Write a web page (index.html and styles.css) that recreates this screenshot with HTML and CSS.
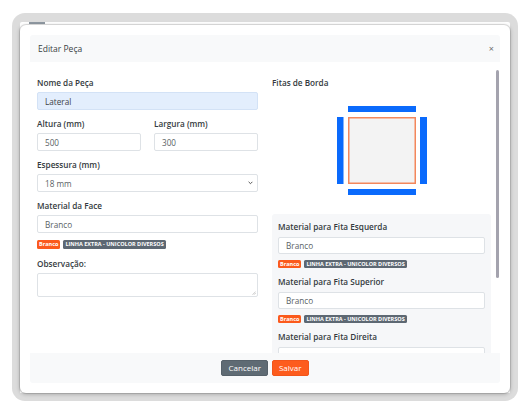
FILE: index.html
```html
<!DOCTYPE html>
<html lang="pt-BR">
<head>
<meta charset="utf-8">
<title>Editar Peça</title>
<link rel="stylesheet" href="styles.css">
</head>
<body>
<div class="window">
  <div class="page">
    <div class="behind-tab"></div>
    <div class="modal">
      <div class="modal-header">
        <span class="modal-title">Editar Peça</span>
        <span class="modal-close">×</span>
      </div>
      <div class="modal-body">
        <div class="content">
          <div class="col col-left">
            <div class="field">
              <div class="label">Nome da Peça</div>
              <div class="input input-focus">Lateral</div>
            </div>
            <div class="field-row">
              <div class="field">
                <div class="label">Altura (mm)</div>
                <div class="input">500</div>
              </div>
              <div class="field">
                <div class="label">Largura (mm)</div>
                <div class="input">300</div>
              </div>
            </div>
            <div class="field">
              <div class="label">Espessura (mm)</div>
              <div class="input select">
                <span>18 mm</span>
                <svg class="chev" width="5" height="4" viewBox="0 0 5 4"><path d="M0.6 0.8 L2.5 2.7 L4.4 0.8" fill="none" stroke="#444" stroke-width="0.9"/></svg>
              </div>
            </div>
            <div class="field">
              <div class="label">Material da Face</div>
              <div class="input">Branco</div>
              <div class="badges badges-face">
                <span class="badge badge-orange">Branco</span>
                <span class="badge badge-gray">LINHA EXTRA - UNICOLOR DIVERSOS</span>
              </div>
            </div>
            <div class="field">
              <div class="label">Observação:</div>
              <div class="textarea">
                <svg width="4" height="4" viewBox="0 0 4 4"><path d="M0.5 3.7 L3.7 0.5 M2 3.7 L3.7 2" stroke="#aaa" stroke-width="0.6"/></svg>
              </div>
            </div>
          </div>
          <div class="col col-right">
            <div class="label label-tight">Fitas de Borda</div>
            <div class="diagram">
              <svg width="90" height="89" viewBox="0 0 90 89">
                <rect x="11" y="0" width="68" height="6" fill="#0a6afc"/>
                <rect x="0" y="11" width="6.5" height="67" fill="#0a6afc"/>
                <rect x="83" y="11" width="7" height="67" fill="#0a6afc"/>
                <rect x="11" y="83" width="68" height="6" fill="#0a6afc"/>
                <rect x="11.75" y="11.75" width="66.5" height="65.5" fill="#f3f3f3" stroke="#f3875b" stroke-width="1.5"/>
              </svg>
            </div>
            <div class="panel">
              <div class="panel-group">
                <div class="label">Material para Fita Esquerda</div>
                <div class="input input-sm">Branco</div>
                <div class="badges">
                  <span class="badge badge-orange">Branco</span>
                  <span class="badge badge-gray">LINHA EXTRA - UNICOLOR DIVERSOS</span>
                </div>
              </div>
              <div class="panel-group">
                <div class="label">Material para Fita Superior</div>
                <div class="input input-sm">Branco</div>
                <div class="badges">
                  <span class="badge badge-orange">Branco</span>
                  <span class="badge badge-gray">LINHA EXTRA - UNICOLOR DIVERSOS</span>
                </div>
              </div>
              <div class="panel-group">
                <div class="label">Material para Fita Direita</div>
                <div class="input input-sm input-empty"></div>
              </div>
            </div>
          </div>
        </div>
        <div class="scrollbar"><div class="thumb"></div></div>
      </div>
      <div class="modal-footer">
        <button class="btn btn-cancel">Cancelar</button>
        <button class="btn btn-save">Salvar</button>
      </div>
    </div>
  </div>
</div>
</body>
</html>
```
FILE: styles.css
```css
* { box-sizing: border-box; }
html, body { margin: 0; padding: 0; background: #ffffff; }
body {
  font-family: "Open Sans", "Noto Sans", "DejaVu Sans", sans-serif;
  color: #343a40;
  width: 529px;
  height: 411px;
  overflow: hidden;
}
.window {
  margin: 13px 0 0 12px;
  width: 506px;
  height: 388px;
  background: #dcdcdc;
  border-radius: 13px;
  padding: 9px 8px 8px 8px;
}
.page {
  position: relative;
  height: 100%;
  background: #ffffff;
  padding-top: 3px;
  border-radius: 2px 2px 0 0;
}
.behind-tab {
  position: absolute;
  left: 9px;
  top: 0;
  width: 16px;
  height: 1.5px;
  background: #8f98a1;
}
.modal {
  position: relative;
  width: 490px;
  height: 368px;
  background: #ffffff;
  border-radius: 6px;
  box-shadow: 0 0 0 1px rgba(0,0,0,0.10), 0 1px 4px rgba(0,0,0,0.28);
  padding: 10px;
  display: flex;
  flex-direction: column;
}
.modal-header {
  height: 27px;
  flex: none;
  background: #f8f9fa;
  border-radius: 3px 3px 0 0;
  display: flex;
  align-items: center;
  justify-content: space-between;
  padding: 0 6px 0 8px;
}
.modal-title { font-size: 8.5px; color: #3a3f45; }
.modal-close { font-size: 9px; color: #6c6c6c; line-height: 1; }
.modal-body {
  flex: 1;
  display: flex;
  overflow: hidden;
  min-height: 0;
}
.content {
  flex: 1;
  display: flex;
  gap: 14px;
  padding: 15px 0 0 7px;
  overflow: hidden;
}
.col { display: flex; flex-direction: column; }
.col-left { width: 221px; gap: 8px; }
.col-right { width: 220px; }
.field { display: flex; flex-direction: column; }
.field-row { display: grid; grid-template-columns: 104px 104px; column-gap: 13px; }
.label {
  font-size: 8.2px;
  line-height: 11px;
  font-weight: 600;
  color: #343a40;
  margin-bottom: 4px;
}
.label-tight { margin-bottom: 0; }
.input {
  height: 18px;
  border: 1px solid #dee2e6;
  border-radius: 2px;
  padding: 0 7px;
  font-size: 8.2px;
  color: #595f65;
  display: flex;
  align-items: center;
  background: #ffffff;
}
.input-sm { height: 17px; }
.input-focus { background: #e3eefd; border-color: #d3e2f6; color: #3d4248; }
.select { justify-content: space-between; padding-right: 4px; }
.chev { display: block; }
.textarea {
  height: 24px;
  border: 1px solid #dee2e6;
  border-radius: 2px;
  display: flex;
  align-items: flex-end;
  justify-content: flex-end;
  padding: 1px;
}
.textarea svg { display: block; }
.badges { display: flex; gap: 3px; margin-top: 7px; }
.badges-face { margin-bottom: 1px; }
.badge {
  height: 8.5px;
  padding: 0 2px;
  font-size: 5.5px;
  line-height: 8.5px;
  font-weight: 700;
  color: #ffffff;
  border-radius: 1.5px;
  white-space: nowrap;
}
.badge-orange { background: #fb5a1c; }
.badge-gray { background: #5d6873; }
.diagram {
  margin-top: 18px;
  display: flex;
  justify-content: center;
  height: 89px;
}
.diagram svg { display: block; }
.panel {
  margin-top: 19px;
  background: #f6f7f9;
  border-radius: 3px;
  padding: 6.5px 6px 20px 6px;
  display: flex;
  flex-direction: column;
  gap: 7.5px;
}
.panel-group { display: flex; flex-direction: column; }
.panel-group .label { margin-bottom: 5px; }
.panel-group .badges { margin-top: 6px; }
.scrollbar {
  width: 9px;
  flex: none;
  display: flex;
  justify-content: flex-end;
  padding-top: 8px;
  padding-right: 1px;
}
.thumb {
  width: 3px;
  height: 208px;
  background: #a4a3ae;
  border-radius: 2px;
}
.modal-footer {
  height: 30px;
  flex: none;
  background: #f8f9fa;
  border-radius: 0 0 3px 3px;
  display: flex;
  align-items: center;
  justify-content: center;
  gap: 4px;
}
.btn {
  height: 16px;
  padding: 0 6px;
  font-family: "Open Sans", "Noto Sans", sans-serif;
  font-size: 8px;
  line-height: 14px;
  color: #ffffff;
  border-radius: 2px;
  border: 1px solid transparent;
  cursor: pointer;
}
.btn-cancel { background: #5f6b74; border-color: #56616a; }
.btn-save { background: #fd5c1d; border-color: #f2551a; }
```
